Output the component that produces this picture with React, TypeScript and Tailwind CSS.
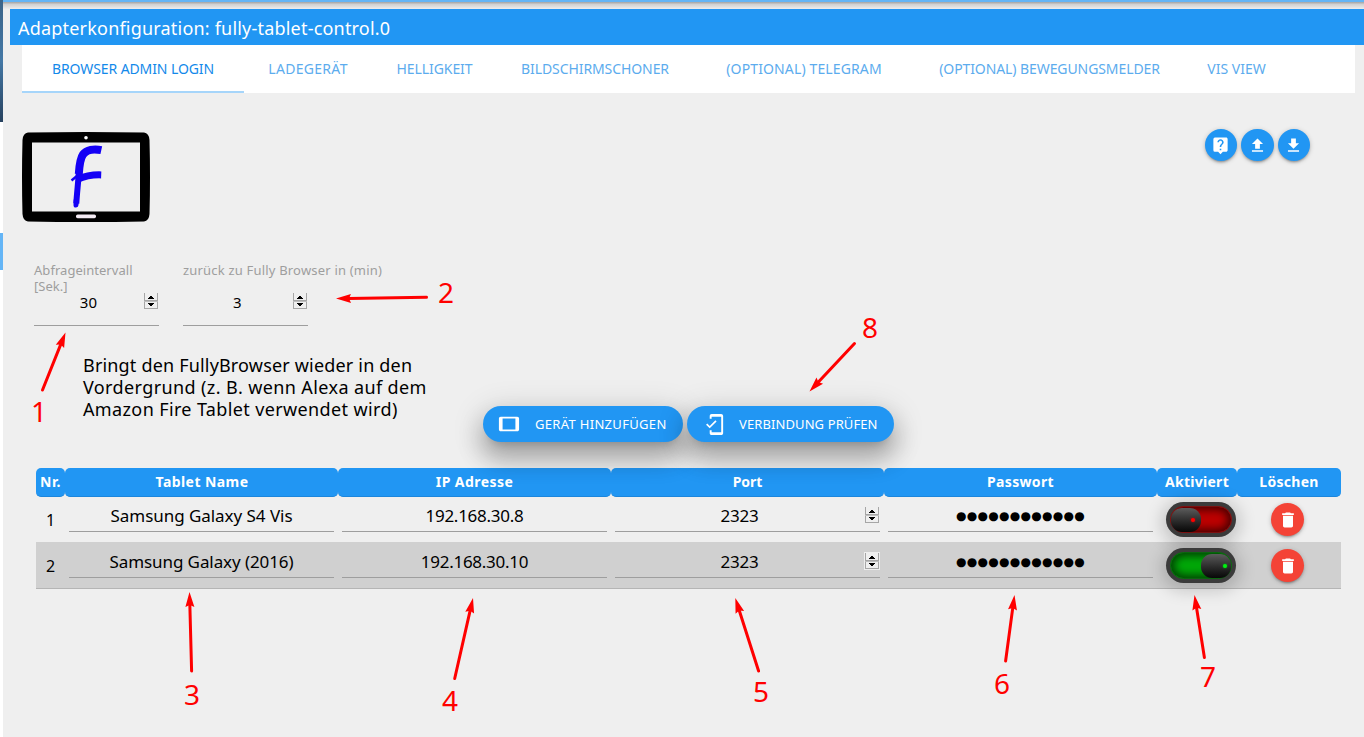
import React from "react";
import { MdDelete, MdLiveHelp, MdMobileFriendly, MdTablet } from "react-icons/md";

const tabs = [
  { label: "BROWSER ADMIN LOGIN", cls: "w-[222px] tracking-[-0.1px]" },
  { label: "LADEGERÄT", cls: "w-[128px] tracking-[0.31px]" },
  { label: "HELLIGKEIT", cls: "w-[125px] tracking-[-0.08px]" },
  { label: "BILDSCHIRMSCHONER", cls: "w-[196px] tracking-[-0.09px]" },
  { label: "(OPTIONAL) TELEGRAM", cls: "w-[222px] tracking-[0.13px]" },
  { label: "(OPTIONAL) BEWEGUNGSMELDER", cls: "w-[269px] tracking-[-0.09px]" },
  { label: "VIS VIEW", cls: "w-[105px]" },
];

const columns = [
  { label: "Nr.", cls: "tracking-[0.55px]" },
  { label: "Tablet Name", cls: "tracking-[0.43px] pl-[1px]" },
  { label: "IP Adresse", cls: "tracking-[0.44px]" },
  { label: "Port", cls: "tracking-[-0.07px]" },
  { label: "Passwort", cls: "tracking-[0.35px]" },
  { label: "Aktiviert", cls: "tracking-[0.28px]" },
  { label: "Löschen", cls: "tracking-[0.3px]" },
];

const devices = [
  { nr: 1, name: "Samsung Galaxy S4 Vis", ip: "192.168.30.8", port: "2323", on: false },
  { nr: 2, name: "Samsung Galaxy (2016)", ip: "192.168.30.10", port: "2323", on: true },
];

const arrows = [
  [42.5, 390, 65.5, 332.5],
  [426.5, 297.3, 336, 298.6],
  [854.5, 343.5, 809.5, 391.5],
  [191.6, 671, 189.5, 592],
  [454.7, 678.5, 473, 598],
  [758.6, 671, 735.3, 598],
  [1005.6, 661, 1014.5, 595],
  [1204.4, 657.5, 1194.5, 595],
];

const marks = [
  { n: "1", cls: "left-[29px] top-[392px]" },
  { n: "2", cls: "left-[436px] top-[273px]" },
  { n: "3", cls: "left-[182px] top-[675px]" },
  { n: "4", cls: "left-[440px] top-[681px]" },
  { n: "5", cls: "left-[751px] top-[672px]" },
  { n: "6", cls: "left-[992px] top-[664px]" },
  { n: "7", cls: "left-[1198px] top-[657px]" },
  { n: "8", cls: "left-[860px] top-[308px]" },
];

function Stepper({ framed = false }: { framed?: boolean }) {
  return (
    <svg width="16" height="18" viewBox="0 0 16 18" shapeRendering="crispEdges" className="block shrink-0">
      {framed && <rect width="16" height="18" fill="#efefef" />}
      <path d="M1.500 1V8.500H14.500V1M1.500 10V16.500H14.500V10" fill="none" stroke="#a6a6a6" />
      <path d="M1 9.500H15" stroke="#bdbdbd" />
      <path d="M7 4h2v1h1v1h1v1H5V6h1V5h1zM5 11h6v1h-1v1H9v1H7v-1H6v-1H5z" fill="#000" />
    </svg>
  );
}

function Logo() {
  return (
    <svg width="128" height="90" viewBox="0 0 128 90" className="block">
      <path
        fillRule="evenodd"
        d="M6 .5Q64-.5 122 .5Q127 1 127.500 8Q128.500 45 127.500 82Q127 89 122 89.500Q64 90.500 6 89.500Q1 89 .5 82Q-.5 45 .5 8Q1 1 6 .5ZM10 10.500V79.500H118V10.500Z"
      />
      <circle cx="64" cy="5.700" r="1.800" fill="#fff" />
      <rect x="54" y="82.600" width="20" height="3.600" rx="1.600" fill="#f3eaf3" />
      <g fill="none" stroke="#1400f5" strokeLinejoin="round">
        <path d="M79.300 18.200C72 16.600 64.500 17.800 61 22.500C57.800 27 57.300 34 56.800 42" strokeWidth="8" />
        <path d="M57 38C56.300 50 55 60 54.300 71.500" strokeWidth="6" />
        <path d="M54.200 68L54 73" strokeWidth="5" strokeLinecap="round" />
        <path d="M55 47.500C62 44.500 71 42.600 79.200 42.900" strokeWidth="7" />
        <path d="M49.500 48.500L55.500 43.500" strokeWidth="2.400" />
      </g>
    </svg>
  );
}

function Round({ children }: { children: React.ReactNode }) {
  return (
    <button className="flex h-8 w-[32.5px] items-center justify-center rounded-full bg-[#2196f3] text-white shadow-[0_2px_2px_0_rgba(0,0,0,0.14),0_3px_1px_-2px_rgba(0,0,0,0.12),0_1px_5px_0_rgba(0,0,0,0.2)]">
      {children}
    </button>
  );
}

function NumberField({ label, value, labelCls }: { label: React.ReactNode; value: string; labelCls: string }) {
  return (
    <div className="flex h-[64px] w-[125px] flex-col">
      <div className={"h-[30px] text-[13px] leading-4 whitespace-nowrap text-[#9e9e9e] " + labelCls}>{label}</div>
      <div className="flex h-[34px] border-b border-[#9e9e9e]">
        <span className="flex-1 text-center text-[15px] leading-[20px] tracking-[0.17px]">{value}</span>
        <Stepper />
      </div>
    </div>
  );
}

const pill =
  "flex h-9 items-center rounded-full bg-[#2196f3] text-[13px] text-white shadow-[0_16px_24px_2px_rgba(0,0,0,0.24),0_6px_30px_5px_rgba(0,0,0,0.12),0_8px_10px_-7px_rgba(0,0,0,0.2)]";

function Toggle({ on }: { on: boolean }) {
  return (
    <div className="h-[35px] w-[70px] rounded-full bg-[#3b3b3b] p-1 shadow-[0_3px_16px_5px_rgba(0,0,0,0.17)]">
      <div
        className={
          on
            ? "flex h-[27px] w-[62px] items-center justify-end rounded-full border border-[#0a650e] bg-[#00a808] shadow-[inset_0_0_9px_3px_#013f03]"
            : "flex h-[27px] w-[62px] items-center rounded-full border border-[#7c1010] bg-[#bd0000] shadow-[inset_0_0_9px_3px_#460000]"
        }
      >
        <div
          className={
            on
              ? "flex h-6 w-[30px] items-center justify-end rounded-[11px] bg-linear-to-b from-[#5c5c5c] to-[#080808] pr-1"
              : "flex h-6 w-[30px] items-center justify-end rounded-[11px] bg-linear-to-b from-[#5c5c5c] to-[#080808] pr-[6px]"
          }
        >
          <span
            className={
              on
                ? "size-1 rounded-full bg-[#00f010] shadow-[0_0_2px_#00c010]"
                : "size-1 rounded-full bg-[#ff0000] shadow-[0_0_2px_#d00000]"
            }
          />
        </div>
      </div>
    </div>
  );
}

function Cell({ children, className = "" }: { children: React.ReactNode; className?: string }) {
  return (
    <div className="px-1">
      <div className={"flex h-[35px] justify-center border-b border-[#9e9e9e] text-[17px] leading-[38px] " + className}>
        {children}
      </div>
    </div>
  );
}

function Annotations() {
  return (
    <div className="pointer-events-none absolute inset-0 z-20">
      <svg width="1364" height="737" className="block">
        {arrows.map(([x1, y1, x2, y2]) => {
          const len = Math.hypot(x2 - x1, y2 - y1);
          const ux = (x2 - x1) / len;
          const uy = (y2 - y1) / len;
          const bx = x2 - ux * 15;
          const by = y2 - uy * 15;
          const head = `${x2},${y2} ${bx - uy * 4.5},${by + ux * 4.5} ${bx + ux * 2},${by + uy * 2} ${bx + uy * 4.5},${by - ux * 4.5}`;
          return (
            <g key={x1} fill="#f00" stroke="#f00">
              <line x1={x1} y1={y1} x2={bx + ux * 3} y2={by + uy * 3} strokeWidth="3" strokeLinecap="round" />
              <polygon points={head} stroke="none" />
            </g>
          );
        })}
      </svg>
      {marks.map((m) => (
        <span key={m.n} className={"absolute w-5 text-center text-[28px] leading-[38px] text-[#ff0000] " + m.cls}>
          {m.n}
        </span>
      ))}
    </div>
  );
}

export default function App() {
  return (
    <div className="relative flex h-[737px] w-[1364px] overflow-hidden bg-[#efefef] font-['Noto_Sans',sans-serif] text-black">
      <div className="flex w-[3px] shrink-0 flex-col bg-white">
        <div className="h-[122px] bg-linear-to-b from-[#3a6489] via-[#4478a6] to-[#27425f]" />
        <div className="h-[111px]" />
        <div className="h-[37px] bg-[#64b5f6]" />
      </div>

      <div className="flex w-[1361px] flex-col">
        <div className="h-[2px] bg-[#64b5f6]" />
        <div className="h-[7px] bg-linear-to-b from-[#a3a3a3] via-[#d2d2d2] via-35% to-[#ededed]" />
        <header className="ml-[7px] h-9 bg-[#2196f3] pl-2 text-[18px] leading-[38px] tracking-[0.2px] text-white">
          Adapterkonfiguration: fully-tablet-control.0
        </header>

        <nav className="ml-[19px] flex h-12 w-[1333px] bg-white text-[14px] leading-12">
          {tabs.map((t, i) => (
            <div
              key={t.label}
              className={
                (i === 0 ? "border-b-2 border-[#a6d5fa] text-[#1389ea] " : "text-[#5cacee] ") +
                "h-12 text-center whitespace-nowrap " +
                t.cls
              }
            >
              {t.label}
            </div>
          ))}
        </nav>

        <div className="ml-[19px] flex h-[168px] justify-between pt-[39px] pr-[54px]">
          <Logo />
          <div className="-mt-[3px] flex gap-1">
            <Round>
              <MdLiveHelp size={19} />
            </Round>
            <Round>
              <svg width="19" height="19" viewBox="0 0 24 24" fill="currentColor">
                <path d="M9 16h6v-6h4l-7-7-7 7h4zm-4 2h14v2H5z" />
              </svg>
            </Round>
            <Round>
              <svg width="19" height="19" viewBox="0 0 24 24" fill="currentColor">
                <path d="M19 9h-4V3H9v6H5l7 7 7-7zM5 18v2h14v-2H5z" />
              </svg>
            </Round>
          </div>
        </div>

        <div className="ml-[31px] flex h-[92px] gap-6 pt-[1px]">
          <NumberField
            label={
              <>
                Abfrageintervall
                <br />
                [Sek.]
              </>
            }
            labelCls="tracking-[0.04px]"
            value="30"
          />
          <NumberField label="zurück zu Fully Browser in (min)" labelCls="tracking-[0.19px]" value="3" />
        </div>

        <div className="flex h-[115px] pl-20">
          <p className="w-[400px] pt-[1px] text-[18px] leading-[22px] whitespace-nowrap">
            <span className="tracking-[0.18px]">Bringt den FullyBrowser wieder in den</span>
            <br />
            <span className="tracking-[0.39px]">Vordergrund (z. B. wenn Alexa auf dem</span>
            <br />
            <span className="tracking-[0.37px]">Amazon Fire Tablet verwendet wird)</span>
          </p>
          <div className="relative z-10 mt-[53px] flex gap-1 self-start">
            <button className={pill + " w-[200px] pl-[15px] tracking-[0.32px]"}>
              <MdTablet size={22} className="mr-[15px]" />
              <span className="pt-[2px]">GERÄT HINZUFÜGEN</span>
            </button>
            <button className={pill + " w-[207px] pl-4 tracking-[0.1px]"}>
              <MdMobileFriendly size={23} className="mr-[13px]" />
              <span className="pt-[2px]">VERBINDUNG PRÜFEN</span>
            </button>
          </div>
        </div>

        <section className="ml-[33px] w-[1305px]">
          <div className="grid grid-cols-[29px_273px_273px_273px_273px_80px_104px]">
            {columns.map((c) => (
              <div
                key={c.label}
                className={
                  "h-[29px] rounded-[5px] border-b border-[#1c86dc] bg-[#2196f3] text-center text-[14px] leading-[28px] font-bold text-white " +
                  c.cls
                }
              >
                {c.label}
              </div>
            ))}
          </div>
          {devices.map((d) => (
            <div
              key={d.nr}
              className={
                "grid grid-cols-[29px_273px_273px_273px_273px_80px_104px] " +
                (d.on ? "h-[47px] border-b border-[#b5b5b5] bg-[#d0d0d0] pt-[1px]" : "h-[45px]")
              }
            >
              <div className="text-center text-[16px] leading-[46px]">{d.nr}</div>
              <Cell className={d.on ? "tracking-[-0.086px]" : "tracking-[-0.044px]"}>{d.name}</Cell>
              <Cell className="tracking-[-0.26px]">{d.ip}</Cell>
              <Cell className="tracking-[-0.22px]">
                <span className="flex-1 text-center">{d.port}</span>
                <span className="pt-[9px]">
                  <Stepper framed={d.on} />
                </span>
              </Cell>
              <Cell className="font-['DejaVu_Sans'] text-[12px]! tracking-[0.3px]">●●●●●●●●●●●●</Cell>
              <div className="flex justify-end pt-[5px] pr-[1px]">
                <Toggle on={d.on} />
              </div>
              <div className="flex justify-center pt-[6px] pr-[3px]">
                <button className="flex size-[33px] items-center justify-center rounded-full bg-[#f44336] text-white shadow-[0_2px_2px_0_rgba(0,0,0,0.14),0_3px_1px_-2px_rgba(0,0,0,0.12),0_1px_5px_0_rgba(0,0,0,0.2)]">
                  <MdDelete size={20} />
                </button>
              </div>
            </div>
          ))}
        </section>
      </div>

      <Annotations />
    </div>
  );
}
